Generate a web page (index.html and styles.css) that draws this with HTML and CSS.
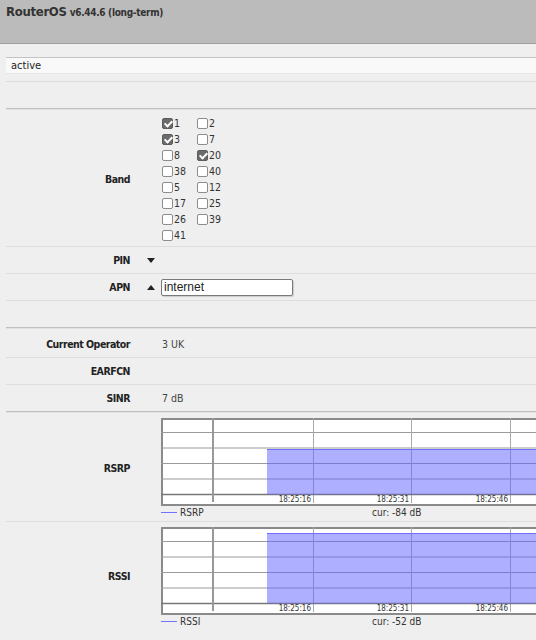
FILE: index.html
```html
<!DOCTYPE html>
<html lang="en">
<head>
    <meta charset="UTF-8">
    <title>RouterOS - LTE</title>
    <link rel="stylesheet" href="styles.css">
</head>
<body>
    <!-- Top bar -->
    <div class="header">
        <span class="brand">RouterOS</span>
        <span class="version">v6.44.6 (long-term)</span>
    </div>

    <div class="content">
        <div class="status">
            <div class="status-box">active</div>
        </div>
        <div class="gap"></div>

        <!-- Settings -->
        <div class="section">
            <div class="row">
                <div class="label">Band</div>
                <div class="toggle"></div>
                <div class="value">
                    <div class="bands">
                        <label class="band"><span class="cb on"></span>1</label>
                        <label class="band"><span class="cb"></span>2</label>
                        <label class="band"><span class="cb on"></span>3</label>
                        <label class="band"><span class="cb"></span>7</label>
                        <label class="band"><span class="cb"></span>8</label>
                        <label class="band"><span class="cb on"></span>20</label>
                        <label class="band"><span class="cb"></span>38</label>
                        <label class="band"><span class="cb"></span>40</label>
                        <label class="band"><span class="cb"></span>5</label>
                        <label class="band"><span class="cb"></span>12</label>
                        <label class="band"><span class="cb"></span>17</label>
                        <label class="band"><span class="cb"></span>25</label>
                        <label class="band"><span class="cb"></span>26</label>
                        <label class="band"><span class="cb"></span>39</label>
                        <label class="band"><span class="cb"></span>41</label>
                    </div>
                </div>
            </div>
            <div class="row">
                <div class="label">PIN</div>
                <div class="toggle"><span class="arrow-down"></span></div>
                <div class="value"></div>
            </div>
            <div class="row">
                <div class="label">APN</div>
                <div class="toggle"><span class="arrow-up"></span></div>
                <div class="value"><input class="apn" type="text" value="internet"></div>
            </div>
            <div class="row"></div>
        </div>

        <!-- Info -->
        <div class="section">
            <div class="row">
                <div class="label">Current Operator</div>
                <div class="toggle"></div>
                <div class="value text">3 UK</div>
            </div>
            <div class="row">
                <div class="label">EARFCN</div>
                <div class="toggle"></div>
                <div class="value text"></div>
            </div>
            <div class="row">
                <div class="label">SINR</div>
                <div class="toggle"></div>
                <div class="value text">7 dB</div>
            </div>
        </div>

        <!-- Graphs -->
        <div class="section">
            <div class="row graph-row">
                <div class="label">RSRP</div>
                <div class="toggle"></div>
                <div class="value">
                    <div class="graph">
                        <svg class="plot" width="380" height="88" viewBox="0 0 380 88">
                            <rect x="1" y="1" width="380" height="86" fill="#fff" stroke="#8a8a8a" stroke-width="2"/>
                            <g stroke="#9a9a9a" stroke-width="1">
                                <line x1="0" y1="14.5" x2="380" y2="14.5"/>
                                <line x1="0" y1="30" x2="380" y2="30"/>
                                <line x1="0" y1="45.5" x2="380" y2="45.5"/>
                                <line x1="0" y1="61" x2="380" y2="61"/>
                            </g>
                            <g stroke="#aaa" stroke-width="1">
                                <line x1="152.5" y1="0" x2="152.5" y2="85"/>
                                <line x1="250.5" y1="0" x2="250.5" y2="85"/>
                                <line x1="349.5" y1="0" x2="349.5" y2="85"/>
                            </g>
                            <line x1="0" y1="76.5" x2="380" y2="76.5" stroke="#777" stroke-width="1.5"/>
                            <line x1="52" y1="0" x2="52" y2="84" stroke="#999" stroke-width="2"/>
                            <rect x="106" y="31" width="274" height="45.5" fill="#6060ff" fill-opacity="0.5"/>
                            <line x1="106" y1="31.5" x2="380" y2="31.5" stroke="#7070ff"/>
                            <g class="ticks" text-anchor="end">
                                <text x="150" y="84">18:25:16</text>
                                <text x="248" y="84">18:25:31</text>
                                <text x="347" y="84">18:25:46</text>
                            </g>
                        </svg>
                        <div class="legend">
                            <span class="legend-key"><svg class="swatch" width="16" height="3" viewBox="0 0 16 3"><line x1="0" y1="1.5" x2="16" y2="1.5" stroke="#7373ff"/></svg>RSRP</span>
                            <span>cur: -84 dB</span>
                        </div>
                    </div>
                </div>
            </div>
            <div class="row graph-row">
                <div class="label">RSSI</div>
                <div class="toggle"></div>
                <div class="value">
                    <div class="graph">
                        <svg class="plot" width="380" height="88" viewBox="0 0 380 88">
                            <rect x="1" y="1" width="380" height="86" fill="#fff" stroke="#8a8a8a" stroke-width="2"/>
                            <g stroke="#9a9a9a" stroke-width="1">
                                <line x1="0" y1="14.5" x2="380" y2="14.5"/>
                                <line x1="0" y1="30" x2="380" y2="30"/>
                                <line x1="0" y1="45.5" x2="380" y2="45.5"/>
                                <line x1="0" y1="61" x2="380" y2="61"/>
                            </g>
                            <g stroke="#aaa" stroke-width="1">
                                <line x1="152.5" y1="0" x2="152.5" y2="85"/>
                                <line x1="250.5" y1="0" x2="250.5" y2="85"/>
                                <line x1="349.5" y1="0" x2="349.5" y2="85"/>
                            </g>
                            <line x1="0" y1="76.5" x2="380" y2="76.5" stroke="#777" stroke-width="1.5"/>
                            <line x1="52" y1="0" x2="52" y2="84" stroke="#999" stroke-width="2"/>
                            <rect x="106" y="6" width="274" height="70.5" fill="#6060ff" fill-opacity="0.5"/>
                            <line x1="106" y1="6.5" x2="380" y2="6.5" stroke="#7070ff"/>
                            <g class="ticks" text-anchor="end">
                                <text x="150" y="84">18:25:16</text>
                                <text x="248" y="84">18:25:31</text>
                                <text x="347" y="84">18:25:46</text>
                            </g>
                        </svg>
                        <div class="legend">
                            <span class="legend-key"><svg class="swatch" width="16" height="3" viewBox="0 0 16 3"><line x1="0" y1="1.5" x2="16" y2="1.5" stroke="#7373ff"/></svg>RSSI</span>
                            <span>cur: -52 dB</span>
                        </div>
                    </div>
                </div>
            </div>
        </div>
    </div>
</body>
</html>
```

FILE: styles.css
```css
/* Reset */
html, body {
    margin: 0;
    padding: 0;
    height: 100%;
    overflow: hidden;
}

body {
    background-color: #efefef;
    font-family: "DejaVu Sans Condensed", "DejaVu Sans", sans-serif;
    font-size: 10.5px;
    color: #333;
}

/* Header */
.header {
    height: 44px;
    box-sizing: border-box;
    padding: 4px 6px 0;
    background: #bbbbbb;
    border-bottom: 1px solid #9e9e9e;
    line-height: 16px;
}

.brand {
    font-size: 13px;
    font-weight: bold;
    letter-spacing: -0.3px;
    color: #333;
}

.version {
    font-size: 10px;
    font-weight: bold;
    letter-spacing: -0.3px;
    color: #333;
}

/* Content */
.content {
    padding-left: 6px;
}

.status {
    padding: 13px 0 7px;
    border-bottom: 1px solid #dcdcdc;
}

.status-box {
    height: 17px;
    box-sizing: border-box;
    padding: 1px 5px;
    background: #f9f9f9;
    border-top: 1px solid #c4c4c4;
    border-bottom: 1px solid #e6e6e6;
    font-size: 11px;
    line-height: 14px;
    color: #222;
}

.gap {
    height: 26px;
}

.section {
    border-top: 1px solid #bfbfbf;
    box-shadow: inset 0 1px #e2e2e2;
    padding-top: 3px;
}

.row {
    display: flex;
    min-height: 26px;
    border-bottom: 1px solid #dedede;
}

.row:last-child {
    border-bottom: none;
}

.label {
    width: 124px;
    flex: none;
    display: flex;
    align-items: center;
    justify-content: flex-end;
    font-weight: bold;
    letter-spacing: -0.5px;
    color: #222;
}

.toggle {
    width: 31px;
    flex: none;
    box-sizing: border-box;
    padding-right: 6px;
    display: flex;
    align-items: center;
    justify-content: flex-end;
}

.arrow-down {
    width: 0;
    height: 0;
    border-left: 4px solid transparent;
    border-right: 4px solid transparent;
    border-top: 5px solid #222;
}

.arrow-up {
    width: 0;
    height: 0;
    border-left: 4px solid transparent;
    border-right: 4px solid transparent;
    border-bottom: 5px solid #222;
}

.value {
    flex: 1;
    display: flex;
    align-items: center;
    color: #444;
}

.value.text {
    padding-left: 1px;
}

/* Band checkboxes */
.bands {
    display: grid;
    grid-template-columns: 35px 35px;
    grid-auto-rows: 16px;
    padding: 3px 0 3px 1px;
}

.band {
    display: flex;
    align-items: center;
    color: #333;
}

.cb {
    position: relative;
    width: 11px;
    height: 11px;
    box-sizing: border-box;
    margin-right: 1px;
    background: #fff;
    border: 1px solid #8d8d8d;
    border-radius: 2px;
}

.cb.on {
    background: #6b6b6b;
    border-color: #5c5c5c;
}

.cb.on::after {
    content: "";
    position: absolute;
    left: 3px;
    top: 0;
    width: 3px;
    height: 6px;
    border: solid #fff;
    border-width: 0 2px 2px 0;
    transform: rotate(45deg);
}

/* APN input */
.apn {
    width: 132px;
    height: 17px;
    box-sizing: border-box;
    margin: 0;
    padding: 0 2px;
    border: 1px solid #7a7a7a;
    border-radius: 2px;
    background: #fff;
    box-shadow: 1px 1px 1px rgba(0, 0, 0, 0.15);
    font-family: "Liberation Sans", Arial, sans-serif;
    font-size: 12px;
    color: #222;
}

/* Graphs */
.graph-row .value {
    align-items: flex-start;
}

.graph {
    padding: 3px 0 1px;
}

.graph-row + .graph-row .graph {
    padding-top: 5px;
}

.plot {
    display: block;
}

.ticks {
    font-family: "DejaVu Sans Condensed", "DejaVu Sans", sans-serif;
    font-size: 8px;
    fill: #333;
}

.legend {
    display: flex;
    align-items: center;
    height: 13px;
    margin-bottom: 1px;
    font-size: 10px;
    color: #333;
}

.legend-key {
    width: 211px;
    display: flex;
    align-items: center;
}

.swatch {
    display: block;
    margin-right: 3px;
}
```
